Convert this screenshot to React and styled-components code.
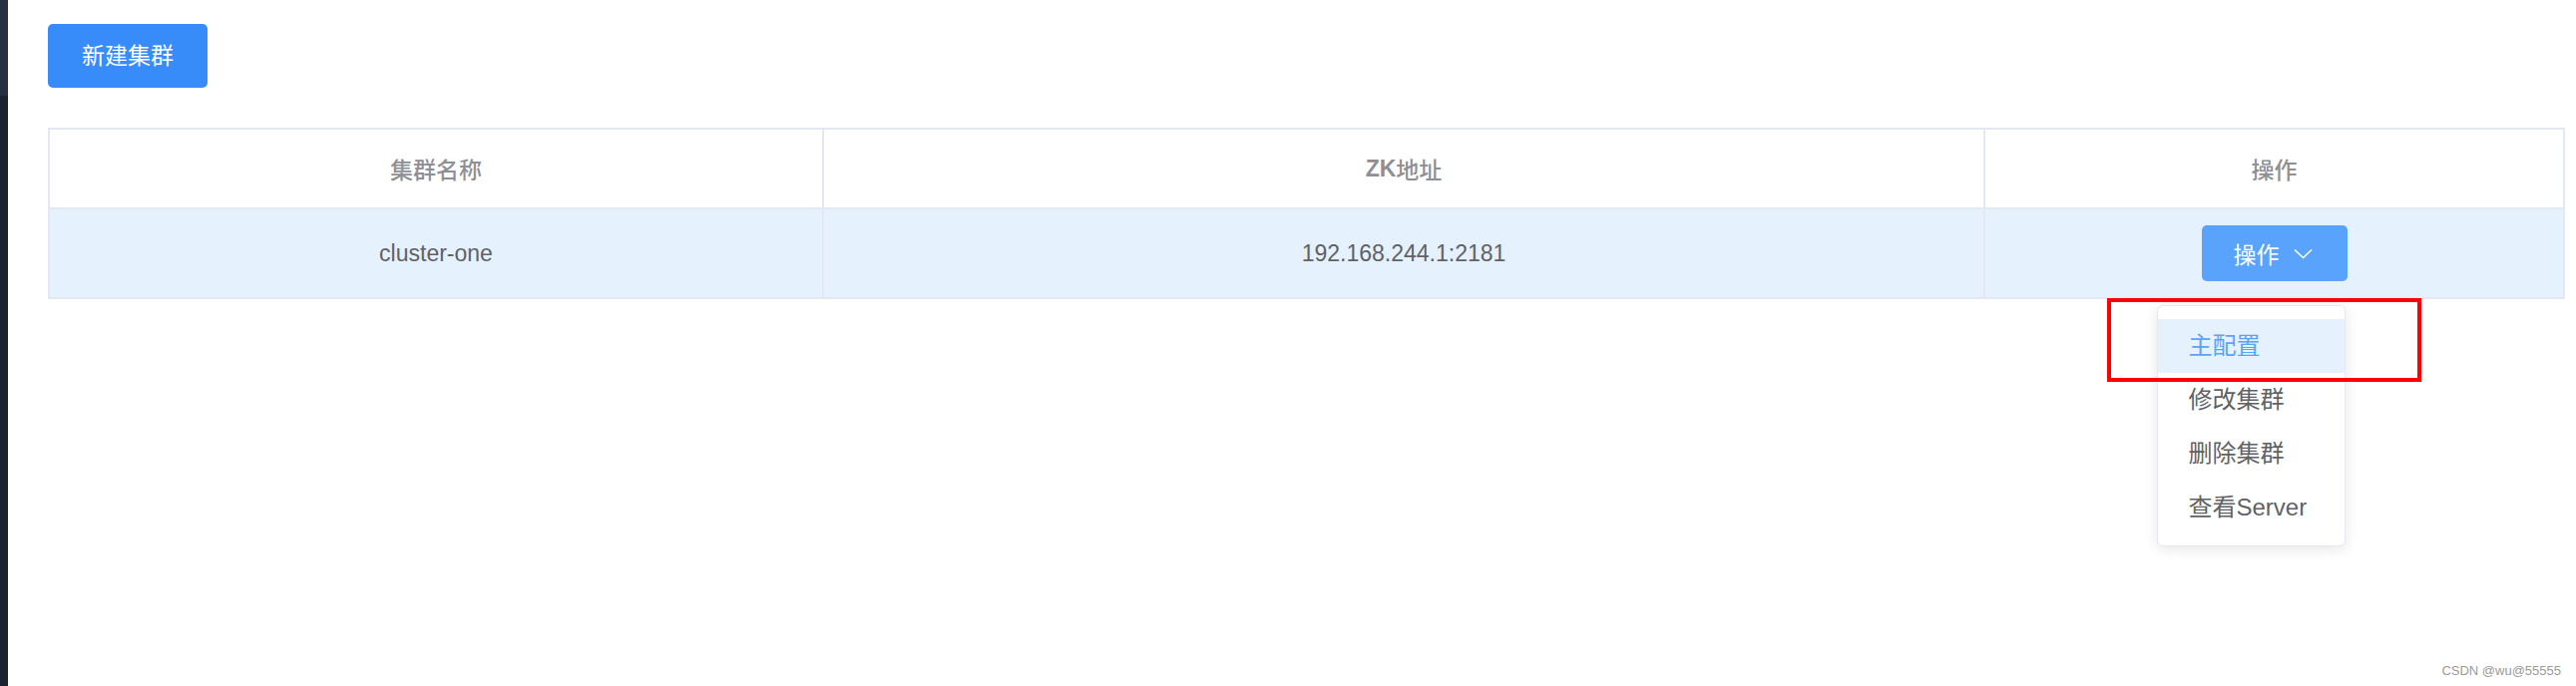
import React from 'react';
import styled, { createGlobalStyle } from 'styled-components';

const GlobalStyle = createGlobalStyle`
  html, body { margin: 0; padding: 0; background: #ffffff; }
  body { font-family: "Liberation Sans", "Noto Sans CJK SC", sans-serif; }
`;

const FONT = `"Liberation Sans", "Noto Sans CJK SC", sans-serif`;

const Page = styled.div`
  position: relative;
  display: flex;
  width: 2582px;
  height: 688px;
  overflow: hidden;
  background: #ffffff;
`;

const SideStrip = styled.div`
  display: flex;
  flex-direction: column;
  width: 8px;
  flex: 0 0 8px;
  background: #1b2333;
`;

const SideTop = styled.div`
  height: 96px;
  background: #263043;
`;

const Main = styled.div`
  flex: 1;
  display: flex;
  flex-direction: column;
  align-items: flex-start;
  gap: 40px;
  padding: 24px 11px 0 40px;
`;

const PrimaryButton = styled.button`
  height: 64px;
  padding: 0 34px;
  border: none;
  border-radius: 5px;
  background: #388cfa;
  color: #ffffff;
  font-family: ${FONT};
  font-size: 23px;
  line-height: 64px;
  cursor: pointer;
`;

/* table: gap lines act as the 2px cell borders */
const Grid = styled.div`
  align-self: stretch;
  display: grid;
  grid-template-columns: 774px 1162px 1fr;
  grid-template-rows: 78px 88px;
  gap: 2px;
  padding: 2px;
  background: #e4e8f1;
`;

const Cell = styled.div`
  display: flex;
  align-items: center;
  justify-content: center;
  background: ${p => (p.$head ? '#ffffff' : '#e6f1fe')};
  color: ${p => (p.$head ? '#8e9096' : '#606266')};
  font-family: ${FONT};
  font-size: 23px;
  font-weight: ${p => (p.$head ? 500 : 400)};
`;

const Latin = styled.b`
  font-weight: 700;
`;

const ActionWrap = styled.div`
  position: relative;
`;

const ActionButton = styled.button`
  display: flex;
  align-items: center;
  gap: 14px;
  width: 146px;
  height: 56px;
  padding: 0 0 0 32px;
  border: none;
  border-radius: 5px;
  background: #5aa3fc;
  color: #ffffff;
  font-family: ${FONT};
  font-size: 23px;
  cursor: pointer;
`;

const Menu = styled.ul`
  position: absolute;
  top: calc(100% + 24px);
  right: 2px;
  width: 189px;
  box-sizing: border-box;
  margin: 0;
  padding: 13px 0 11px;
  list-style: none;
  background: #ffffff;
  border: 1px solid #e6e9f0;
  border-radius: 6px;
  box-shadow: 0 3px 14px rgba(0, 0, 0, 0.1);
  z-index: 2;
`;

const MenuItem = styled.li`
  height: 54px;
  line-height: 54px;
  padding: 0 0 0 31px;
  font-family: ${FONT};
  font-size: 24px;
  white-space: nowrap;
  background: ${p => (p.$active ? '#e6f1fe' : 'transparent')};
  color: ${p => (p.$active ? '#5aa3fc' : '#606266')};
`;

const Highlight = styled.div`
  position: absolute;
  left: -95px;
  top: 73px;
  width: 315px;
  height: 84px;
  box-sizing: border-box;
  border: 4px solid #ff0000;
  z-index: 3;
  pointer-events: none;
`;

const Watermark = styled.div`
  position: absolute;
  right: 15px;
  bottom: 8px;
  font-family: ${FONT};
  font-size: 13px;
  color: #9a9a9a;
`;

const Chevron = () => (
  <svg width="19" height="11" viewBox="0 0 19 11" fill="none">
    <path d="M1 1.5 L9.5 9.5 L18 1.5" stroke="#ffffff" strokeWidth="1.5" />
  </svg>
);

const menu = ['主配置', '修改集群', '删除集群', '查看Server'];

export default function App() {
  return (
    <>
      <GlobalStyle />
      <Page>
        <SideStrip>
          <SideTop />
        </SideStrip>
        <Main>
          <PrimaryButton>新建集群</PrimaryButton>
          <Grid>
            <Cell $head>集群名称</Cell>
            <Cell $head><Latin>ZK</Latin>地址</Cell>
            <Cell $head>操作</Cell>
            <Cell>cluster-one</Cell>
            <Cell>192.168.244.1:2181</Cell>
            <Cell>
              <ActionWrap>
                <ActionButton>
                  操作 <Chevron />
                </ActionButton>
                <Menu>
                  {menu.map((m, i) => (
                    <MenuItem key={m} $active={i === 0}>{m}</MenuItem>
                  ))}
                </Menu>
                <Highlight />
              </ActionWrap>
            </Cell>
          </Grid>
        </Main>
        <Watermark>CSDN @wu@55555</Watermark>
      </Page>
    </>
  );
}
